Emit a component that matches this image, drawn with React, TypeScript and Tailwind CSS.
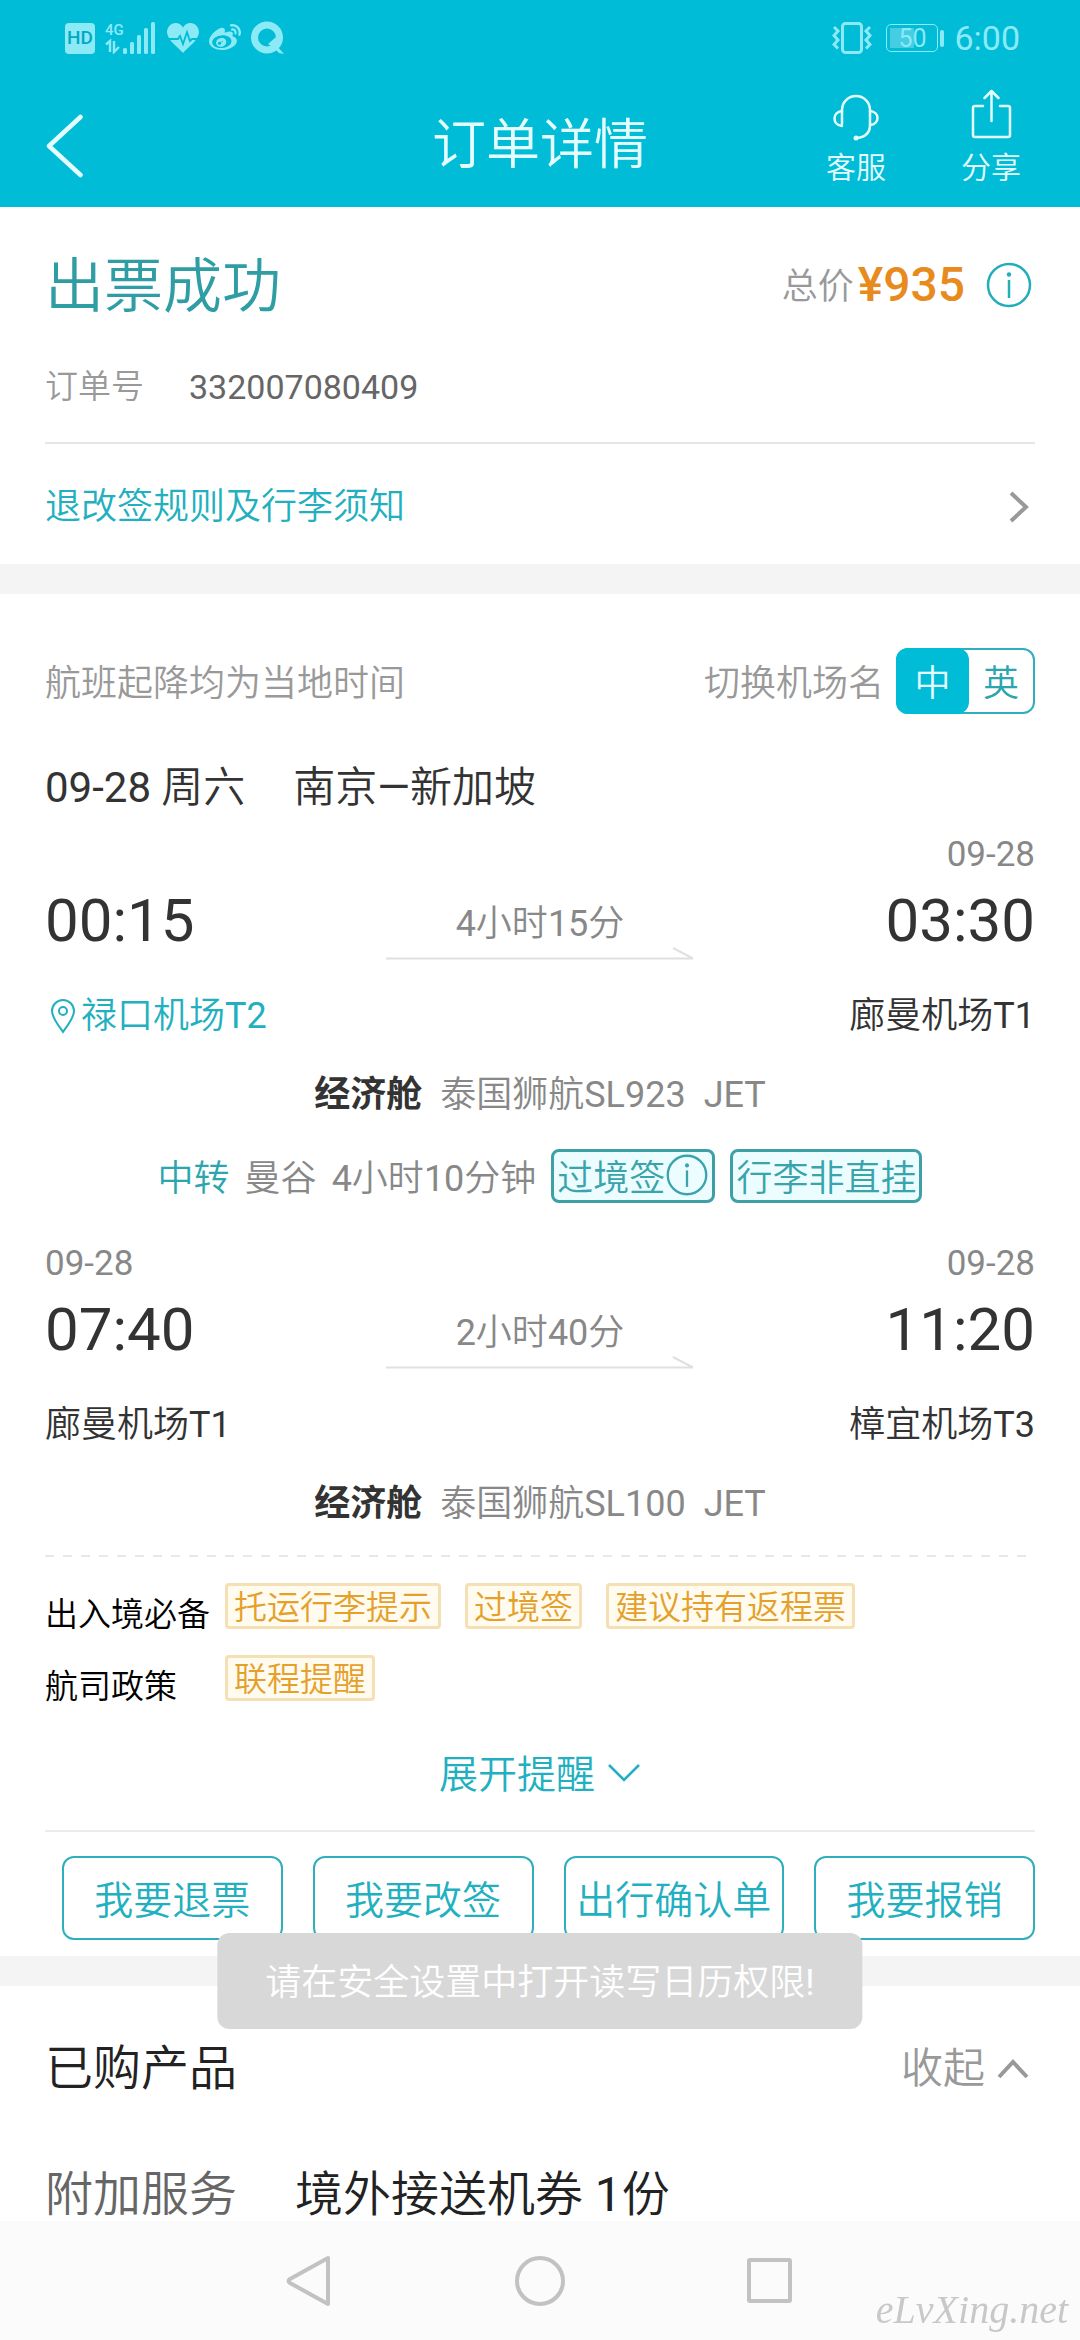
import { useState } from "react";
import type { ReactNode } from "react";
import { FaWeibo } from "react-icons/fa";

type Stop = { date?: string; time: string; airport: string; located?: boolean };
type Leg = { from: Stop; to: Stop; duration: string; flight: string; plane: string };

const legs: Leg[] = [
  {
    from: { time: "00:15", airport: "禄口机场T2", located: true },
    to: { date: "09-28", time: "03:30", airport: "廊曼机场T1" },
    duration: "4小时15分",
    flight: "泰国狮航SL923",
    plane: "JET",
  },
  {
    from: { date: "09-28", time: "07:40", airport: "廊曼机场T1" },
    to: { date: "09-28", time: "11:20", airport: "樟宜机场T3" },
    duration: "2小时40分",
    flight: "泰国狮航SL100",
    plane: "JET",
  },
];

const reminders = [
  { label: "出入境必备", tags: ["托运行李提示", "过境签", "建议持有返程票"] },
  { label: "航司政策", tags: ["联程提醒"] },
];

const actions = ["我要退票", "我要改签", "出行确认单", "我要报销"];

export default function App() {
  return (
    <div className="flex min-h-screen flex-col bg-white font-['Roboto','Noto_Sans_CJK_SC',sans-serif] font-[350] text-[#333]">
      <header className="bg-[#00bcd7] text-[#e4fdff]">
        <StatusBar />
        <TitleBar />
      </header>
      <main className="flex-1">
        <OrderSummary />
        <div className="h-[30px] bg-[#f4f4f4]" />
        <Itinerary />
        <div className="h-[30px] bg-[#f4f4f4]" />
        <Products />
      </main>
      <SystemNav />
      <div
        role="status"
        className="fixed bottom-[311px] left-1/2 -translate-x-1/2 rounded-xl bg-[#d8d8d8] px-12 pt-7 pb-6 text-[36px] leading-[44px] whitespace-nowrap text-white"
      >
        <Mixed text="请在安全设置中打开读写日历权限!" />
      </div>
      <span className="fixed right-3 bottom-2 font-['Liberation_Serif',serif] text-[40px] leading-[44px] text-[#c8c8c8] italic">
        eLvXing.net
      </span>
    </div>
  );
}

function StatusBar() {
  return (
    <div className="flex h-[84px] items-center justify-between pr-[60px] pb-2 pl-[65px] font-normal text-[#8beaf6]">
      <div className="flex items-center gap-[10px]">
        <span className="flex h-[31px] w-[30px] items-center justify-center rounded-[4px] bg-[#8beaf6] text-[19px] font-medium text-[#00a9c3]">
          HD
        </span>
        <div className="flex items-end">
          <div className="flex w-[18px] flex-col">
            <span className="text-[15px] leading-4 font-medium">4G</span>
            <svg viewBox="0 0 16 16" className="h-4 w-4" fill="none" stroke="currentColor" strokeWidth="2.4">
              <path d="M1 6.5 5 3v11M9 3v11l5-5M9 3v6" />
            </svg>
          </div>
          <svg viewBox="0 0 34 32" className="h-8 w-[34px]" fill="currentColor">
            <rect x="0" y="26" width="4" height="6" rx="1.5" />
            <rect x="7" y="20" width="4" height="12" rx="1.5" />
            <rect x="14" y="13" width="4" height="19" rx="1.5" />
            <rect x="21" y="6" width="4" height="26" rx="1.5" />
            <rect x="28" y="0" width="4" height="32" rx="1.5" />
          </svg>
        </div>
        <svg viewBox="0 0 32 30" className="h-[30px] w-8">
          <path fill="currentColor" d="M16 30C11 24 1 18 0 9.500C0 4 4 0 8.500 0 12 0 14.500 2 16 4.500 17.500 2 20 0 23.500 0 28 0 32 4 32 9.500 31 18 21 24 16 30Z" />
          <path fill="none" stroke="#00bcd7" strokeWidth="1.800" d="M2 16h9l2-3 3 8 4-12 3 9 2-2h6" />
        </svg>
        <FaWeibo className="h-[34px] w-8" />
        <svg viewBox="0 0 33 34" className="h-[34px] w-[33px]">
          <circle cx="16" cy="16.500" r="12.500" fill="none" stroke="currentColor" strokeWidth="7" />
          <path fill="currentColor" d="m17 23 8-7 1 9 7 8-5-1-4-4Z" />
        </svg>
      </div>
      <div className="flex items-center gap-[10px]">
        <svg viewBox="0 0 40 32" className="mr-1 h-8 w-10" fill="none" stroke="currentColor" strokeWidth="3">
          <rect x="10.500" y="1.500" width="19" height="29" rx="3" />
          <path d="m2 5 4 4-4 4.500 4 4.500-4 4.500 4 4M38 5l-4 4 4 4.500-4 4.500 4 4.500-4 4" />
        </svg>
        <div className="flex items-center gap-[2px]">
          <div className="flex h-7 w-[52px] items-center justify-center rounded-[5px] border border-current bg-[linear-gradient(90deg,#45cde2_24px,transparent_24px)] bg-origin-content bg-no-repeat p-[3px] text-[25px] leading-none">
            50
          </div>
          <div className="h-[17px] w-1 rounded-sm bg-current" />
        </div>
        <span className="text-[34px] leading-10">6:00</span>
      </div>
    </div>
  );
}

function TitleBar() {
  return (
    <div className="grid h-[123px] grid-cols-[1fr_auto_1fr] items-center px-[45px]">
      <button type="button" aria-label="返回" className="justify-self-start">
        <svg viewBox="0 0 38 64" className="h-16 w-[38px]" fill="none" stroke="currentColor" strokeWidth="4.500" strokeLinecap="round" strokeLinejoin="round">
          <path d="M35.500 3 4 32l31.500 29" />
        </svg>
      </button>
      <h1 className="text-[54px] leading-[64px]">订单详情</h1>
      <div className="flex gap-[75px] justify-self-end self-start pt-[3px] pr-[14px]">
        <button type="button" className="flex flex-col items-center gap-[5px] text-[30px] leading-10">
          <svg viewBox="0 0 50 56" className="h-14 w-[50px]" fill="none" stroke="currentColor" strokeWidth="2.500" strokeLinecap="round">
            <path d="M11 37V23a14 14 0 0 1 28 0v15c0 8-5 12-13 13" />
            <path d="M11 24c-10 1-10 14 0 15M39 24c10 1 10 13 0 14" />
            <circle cx="25" cy="51" r="2.500" fill="currentColor" stroke="none" />
          </svg>
          客服
        </button>
        <button type="button" className="flex flex-col items-center gap-[5px] text-[30px] leading-10">
          <svg viewBox="0 0 50 56" className="h-14 w-[50px]" fill="none" stroke="currentColor" strokeWidth="2.500" strokeLinecap="round" strokeLinejoin="round">
            <path d="M17 19H9a2 2 0 0 0-2 2v27a2 2 0 0 0 2 2h33a2 2 0 0 0 2-2V21a2 2 0 0 0-2-2h-8" />
            <path d="M25.500 34V4M18.500 11l7-7 7 7" />
          </svg>
          分享
        </button>
      </div>
    </div>
  );
}

function OrderSummary() {
  return (
    <section className="px-[45px]">
      <div className="flex h-[156px] items-center justify-between">
        <h2 className="pt-1 text-[59px] leading-[64px] text-[#2f9da4]">出票成功</h2>
        <div className="flex items-center">
          <span className="pt-1 text-[36px] text-[#999]">总价</span>
          <strong className="ml-1 text-[48px] leading-[56px] font-medium text-[#e88b1e]">¥935</strong>
          <button type="button" aria-label="价格说明" className="mr-[2px] ml-5 text-[#22adbb]">
            <InfoIcon className="size-12" />
          </button>
        </div>
      </div>
      <dl className="flex h-[81px] items-start gap-[45px] border-b-2 border-[#e6e6e6] pt-px leading-[46px]">
        <dt className="text-[33px] text-[#999]">订单号</dt>
        <dd className="text-[34px] font-normal text-[#666]">332007080409</dd>
      </dl>
      <a href="#rules" className="flex h-[120px] items-center justify-between pt-[6px] text-[36px] text-[#22b0c0]">
        退改签规则及行李须知
        <svg viewBox="0 0 20 32" className="mr-[6px] h-8 w-5" fill="none" stroke="#999" strokeWidth="4">
          <path d="m2 2 15 14L2 30" />
        </svg>
      </a>
    </section>
  );
}

function Itinerary() {
  return (
    <section className="px-[45px] pt-[54px]">
      <div className="flex h-[66px] items-center justify-between text-[36px] text-[#999]">
        <p className="pt-[6px]">航班起降均为当地时间</p>
        <div className="flex items-center gap-3">
          <span className="pt-[6px]">切换机场名</span>
          <NameSwitch />
        </div>
      </div>
      <h2 className="mt-12 flex gap-12 text-[42px] leading-[52px]">
        <Mixed text="09-28 周六" />
        <Mixed text="南京—新加坡" />
      </h2>

      <LegInfo leg={legs[0]} className="mt-5" />
      <div className="mt-8 flex h-[54px] items-center justify-center gap-[15px] text-[36px] text-[#888]">
        <span className="pt-[6px] text-[#2ba5ae]">中转</span>
        <span className="pt-[6px]">曼谷</span>
        <span className="pt-[6px]">
          <Mixed text="4小时10分钟" />
        </span>
        <TransferTag>
          过境签
          <InfoIcon className="mb-2 size-11" />
        </TransferTag>
        <TransferTag>行李非直挂</TransferTag>
      </div>
      <LegInfo leg={legs[1]} className="mt-10" />

      <div className="mt-[29px] h-[2px] bg-[repeating-linear-gradient(90deg,#e8e8e8_0_9px,transparent_9px_18px)]" />
      <div className="flex flex-col gap-[18px] pt-[26px]">
        {reminders.map((r) => (
          <div key={r.label} className="flex items-start">
            <span className="w-[180px] pt-[9px] text-[33px] leading-[45px] whitespace-nowrap text-black">{r.label}</span>
            <div className="flex gap-6">
              {r.tags.map((tag) => (
                <span
                  key={tag}
                  className="flex h-[46px] items-center rounded-[4px] border-3 border-[#f5dfb5] bg-[#fffbee] px-[6px] pt-1 text-[33px] whitespace-nowrap text-[#e5a02c]"
                >
                  {tag}
                </span>
              ))}
            </div>
          </div>
        ))}
      </div>
      <button type="button" className="mx-auto mt-[42px] flex items-center gap-3 text-[39px] leading-[48px] text-[#22b0c0]">
        展开提醒
        <svg viewBox="0 0 34 20" className="mb-1 h-5 w-[34px]" fill="none" stroke="currentColor" strokeWidth="2.500">
          <path d="m2 2 15 15L32 2" />
        </svg>
      </button>

      <div className="mt-[31px] grid grid-cols-4 gap-[30px] border-t-2 border-[#ececec] pt-6 pb-4 pl-[17px]">
        {actions.map((a) => (
          <button
            key={a}
            type="button"
            className="h-[84px] rounded-xl border-2 border-[#2fafbc] pt-[6px] text-[39px] whitespace-nowrap text-[#22b0c0]"
          >
            {a}
          </button>
        ))}
      </div>
    </section>
  );
}

function NameSwitch() {
  const [lang, setLang] = useState("中");
  return (
    <div className="flex h-[66px] rounded-xl border-2 border-[#2fafbc]">
      {["中", "英"].map((l) => (
        <button
          key={l}
          type="button"
          aria-pressed={lang === l}
          onClick={() => setLang(l)}
          className={
            lang === l
              ? "-my-[2px] -ml-[2px] w-[73px] rounded-xl bg-[#00bcd7] pt-[6px] text-[#e4fdff]"
              : "w-[64px] pt-[6px] text-[#2ba5ae]"
          }
        >
          {l}
        </button>
      ))}
    </div>
  );
}

function LegInfo({ leg, className }: { leg: Leg; className: string }) {
  return (
    <div className={className}>
      <div className="flex h-10 justify-between text-[35px] leading-[42px] font-normal text-[#888]">
        <span>{leg.from.date}</span>
        <span>{leg.to.date}</span>
      </div>
      <div className="grid h-[86px] grid-cols-[1fr_auto_1fr] items-center">
        <time className="pt-2 text-[60px] leading-[72px] font-normal">{leg.from.time}</time>
        <div className="flex w-[308px] flex-col items-center self-end text-[36px] leading-[44px] text-[#888]">
          <Mixed text={leg.duration} />
          <svg viewBox="0 0 308 14" className="h-[14px] w-full" fill="none" stroke="#e0e0e0" strokeWidth="2">
            <path d="M0 12.500h307L287 2" />
          </svg>
        </div>
        <time className="justify-self-end pt-2 text-[60px] leading-[72px] font-normal">{leg.to.time}</time>
      </div>
      <div className="mt-[34px] flex justify-between text-[36px] leading-[44px]">
        {leg.from.located ? (
          <a href="#map" className="flex items-center text-[#22b0c0]">
            <svg viewBox="0 0 36 36" className="h-9 w-9" fill="none" stroke="currentColor" strokeWidth="2">
              <path d="M18 34C14 28 7 20 7 13a11 11 0 0 1 22 0c0 7-7 15-11 21Z" />
              <circle cx="18" cy="13" r="4" />
            </svg>
            <Mixed text={leg.from.airport} />
          </a>
        ) : (
          <Mixed text={leg.from.airport} />
        )}
        <Mixed text={leg.to.airport} />
      </div>
      <div className="mt-[35px] flex justify-center gap-[18px] text-[36px] leading-[44px] text-[#888]">
        <strong className="font-bold text-[#333]">经济舱</strong>
        <Mixed text={leg.flight} />
        <Mixed text={leg.plane} />
      </div>
    </div>
  );
}

function TransferTag({ children }: { children: ReactNode }) {
  return (
    <button
      type="button"
      className="flex h-[54px] items-center rounded-lg border-3 border-[#3f9fa6] bg-[#ebfdff] px-[3px] pt-[6px] whitespace-nowrap text-[#3aa3ab]"
    >
      {children}
    </button>
  );
}

function Products() {
  return (
    <section className="px-[45px] pt-[57px] text-[48px] leading-[52px] text-[#222]">
      <div className="flex items-center justify-between">
        <h2>已购产品</h2>
        <button type="button" className="mr-[6px] flex items-center gap-3 text-[42px] text-[#999]">
          收起
          <svg viewBox="0 0 32 20" className="h-5 w-8" fill="none" stroke="currentColor" strokeWidth="4">
            <path d="M2 18 16 3l14 15" />
          </svg>
        </button>
      </div>
      <div className="mt-[74px] flex gap-[58px]">
        <span className="text-[#666]">附加服务</span>
        <Mixed text="境外接送机券 1份" />
      </div>
    </section>
  );
}

function SystemNav() {
  return (
    <nav className="flex h-[119px] items-center justify-center gap-[180px] bg-[#fbfbfb] text-[#c2c2c2]">
      <button type="button" aria-label="后退">
        <svg viewBox="0 0 50 52" className="h-[52px] w-[50px]" fill="none" stroke="currentColor" strokeWidth="4" strokeLinejoin="round">
          <path d="M43 3v46L5 28q-3-2 0-4Z" />
        </svg>
      </button>
      <button type="button" aria-label="主屏幕">
        <svg viewBox="0 0 50 52" className="h-[52px] w-[50px]" fill="none" stroke="currentColor" strokeWidth="4">
          <circle cx="25" cy="26" r="23" />
        </svg>
      </button>
      <button type="button" aria-label="最近任务">
        <svg viewBox="0 0 50 52" className="h-[52px] w-[50px]" fill="none" stroke="currentColor" strokeWidth="4">
          <rect x="4" y="5" width="41" height="41" rx="1" />
        </svg>
      </button>
    </nav>
  );
}

// Roboto has no 350 weight, so latin runs go back to regular
function Mixed({ text }: { text: string }) {
  return (
    <span>
      {text.split(/([!-~—]+)/).map((part, i) =>
        i % 2 ? (
          <span key={i} className="font-normal">
            {part}
          </span>
        ) : (
          part
        ),
      )}
    </span>
  );
}

function InfoIcon({ className }: { className: string }) {
  return (
    <svg viewBox="0 0 48 48" className={className} fill="none" stroke="currentColor" strokeWidth="2.500">
      <circle cx="24" cy="24" r="21" />
      <circle cx="24" cy="13.500" r="2.200" fill="currentColor" stroke="none" />
      <path d="M24 19v18" />
    </svg>
  );
}
